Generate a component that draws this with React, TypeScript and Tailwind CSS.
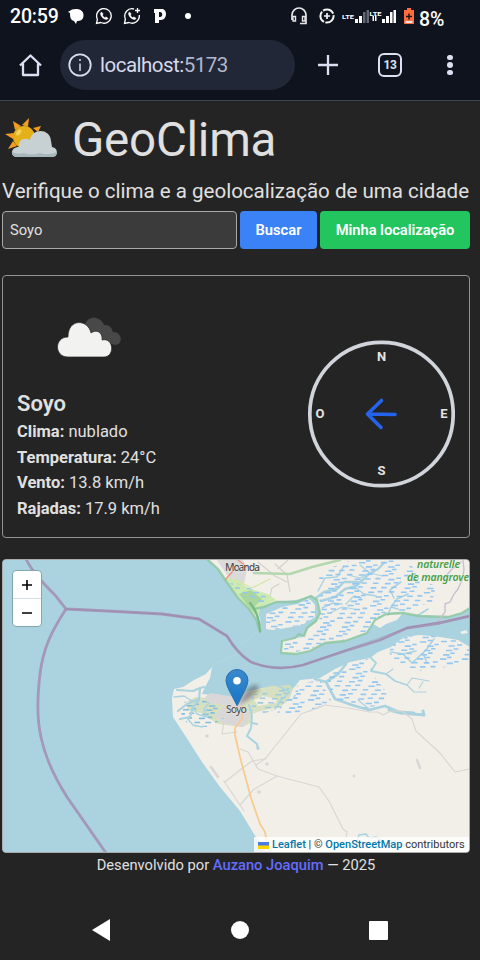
import React from "react";

const marshNorth = "M318 578 L322 570 L336 566 L352 560 L392 560 L412 566 L420 580 L436 586 L432 602 L402 612 L384 614 L374 622 L367 631 L342 640 L326 642 L310 649 L296 652 L284 651 L284 642 L304 640 L308 630 L318 622 L322 611 L319 598 L326 588 Z";
const marshIsland = "M266 629 L266 614 L282 607 L298 604 L309 598 L315 605 L315 617 L302 625 L286 628 L273 630 Z";
const marshSouth = "M470 645 L455 640 L440 637 L425 635 L405 637 L394 644 L388 652 L400 665 L422 671 L442 668 L470 660 Z";
const marshMid = "M328 675 L345 667 L370 658 L374 676 L388 694 L382 705 L364 708 L348 702 L336 700 L328 686 Z";
const marshLow = "M298 684 L320 680 L328 695 L332 702 L310 712 L288 713 L276 716 L282 702 L294 696 Z";
const southLand =
  "M212 667 L210 678 L205 687 L202 694 L212 695 L226 699 L238 703 L246 692 L262 688 L278 686 L292 690 L300 680 L320 678 L335 669 L350 662 L370 658 L378 652 L391 647 L404 637 L420 635 L440 637 L458 640 L470 647 L470 853 L267 853 L254 834 L240 811 L220 787 L202 762 L188 740 L173 717 L172 698 L174 689 L183 687 L194 680 L206 674 Z";

function Dashes({ area, id, seed, color = "#93c8f2" }: { area: string; id: string; seed: number; color?: string }) {
  const nums = area.match(/[\d.]+/g)!.map(Number);
  const xs = nums.filter((_, i) => i % 2 === 0);
  const ys = nums.filter((_, i) => i % 2 === 1);
  const [x0, x1, y0, y1] = [Math.min(...xs), Math.max(...xs), Math.min(...ys), Math.max(...ys)];
  const items: React.ReactNode[] = [];
  let row = 0;
  for (let y = y0 + 1; y < y1; y += 4.3, row++) {
    let col = 0;
    for (let x = x0 - 5 + ((row * 7 + seed) % 10); x < x1; x += 11, col++) {
      const j = Math.sin(row * 12.9 + col * 78.2 + seed) * 2;
      items.push(<rect key={`${row}-${col}`} x={x + j} y={y + j * 0.45} width={5.6 + j * 0.5} height="1.6" rx=".4" />);
    }
  }
  return (
    <g>
      <clipPath id={id}><path d={area} /></clipPath>
      <g clipPath={`url(#${id})`} fill={color}>{items}</g>
    </g>
  );
}

function MapArt() {
  return (
    <svg viewBox="3 560 466 292" className="block h-full w-full" fill="none" strokeLinejoin="round" strokeLinecap="round">
      <rect x="2" y="559" width="468" height="295" fill="#aad3df" />
      <path d="M208 560 L218 569 L226 581 L238 598 L249 609 L256 619 L261 633 L260 618 L256 608 L264 606 L276 602 L296 600 L311 596 L316 600 L320 613 L316 621 L308 628 L303 637 L282 640 L281 653 L296 654 L310 651 L325 643 L345 641 L367 633 L376 619 L384 615 L396 612 L418 616 L448 617 L465 612 L470 608 V560 Z" fill="#f2efe9" />
      <path d="M262 606 L275 602 L296 601 L310 597 L312 600 L298 604 L282 607 L268 613 L267 630 L273 631 L288 630 L304 625 L315 618 L317 621 L308 628 L304 634 L283 640 L264 634 L261 622 L258 611 Z" fill="#aad3df" />
      <path d={marshIsland} fill="#f2efe9" />
      <path d="M373 624 L376 618 L386 614 L403 613 L397 620 L386 624 L380 628 Z" fill="#f2efe9" />
      <path d="M460 632 L466 630 L468 633 L462 634 Z" fill="#f2efe9" />
      <path d="M217 560 L225 572 L238 590 L244 583 L247 570 L243 560 Z" fill="#dadada" />
      <path d="M225 578 L236 579 L248 588 L268 594 L276 600 L260 608 L258 618 L240 600 Z" fill="#cdebb0" />
      <path d="M239 594 L251 590 L262 599 L255 606 L256 614 L248 606 Z" fill="#9dcd97" opacity=".75" />
      <path d="M225 580 L234 570 M238 560 l9 7" stroke="#ee927c" strokeWidth="1.3" />
      <path d="M238 581 l14 7 18 -9" stroke="#d4e7a8" strokeWidth="1.2" />
      <path d="M275 564 L287 575 L290 592 M270 596 L272 588 L279 584 M258 562 l17 14 12 6 M288 560 l-10 9" stroke="#d2d0ce" strokeWidth="1.1" />
      <path d="M254 573 L290 574 L312 567 L340 560" stroke="#b5d7ad" strokeWidth="2.6" />
      <Dashes area="M229 582 L244 585 L258 592 L272 598 L260 604 L240 595 Z" id="g1" seed={3} />

      {/* Tidal channels across the mangrove delta */}
      <g stroke="#aad3df" strokeWidth="2">
        <path d="M316 598 L324 592 L337 589 L344 582 L358 582 M321 601 L335 597 L345 589 L356 586 L369 574 L378 569 L384 563" strokeWidth="2.4" />
        <path d="M322 608 L333 603 L342 604 M318 591 L325 578 L337 577 L344 566 M356 588 L364 594 L376 596 M346 604 L354 596 L361 598" strokeWidth="1.4" />
        <path d="M388 615 L391 607 L397 599 L408 594 M391 607 L398 609 M417 616 L428 609 M394 598 L390 590 L401 582" strokeWidth="1.6" />
        <path d="M360 565 l10 8 12 3 M348 575 l12 3 9 -5 M330 613 l12 -6 12 2" strokeWidth="1.2" />
      </g>
      <Dashes area={marshNorth} id="g2" seed={1} />
      <Dashes area={marshIsland} id="g3" seed={6} />
      <path d="M208 560 L218 569 L226 581 L238 598 L249 609 L256 619 L260 632 M254 609 L264 607 L276 602 L296 602 L311 596 L317 600 L320 613 L316 621 L307 628 L304 636 L299 634 L295 638 L282 641 L281 653 L296 654 L310 651 L325 643 L345 641 L367 633 L375 620 L386 614 L403 613 L419 616 L448 617 L462 613 L470 608" stroke="#8dc8a0" strokeWidth="2.3" opacity=".85" />
      <path d="M250 603 Q259 613 260 631" stroke="#79b98c" strokeWidth="2.4" />
      <path d="M463 560 l1 10 -2 10 -4 9 -4 5 -4 8 -5 2 0 8 -7 10 M445 577 l7 -8 9 -7" stroke="#cbbdce" strokeWidth="1.4" strokeDasharray="3 1" />

      <path d={southLand} fill="#f2efe9" />
      {/* Wetland and urban area around the river mouth */}
      <path d="M188 701 L196 697 L207 698 L225 705 L240 704 L253 691 L270 686 L290 685 L293 689 L289 700 L280 707 L264 710 L252 714 L252 722 L243 727 L218 724 L201 713 L187 710 Z" fill="#d2ddb8" opacity=".85" />
      <path d="M205 697 L211 693 L222 695 L236 697 L251 691 L253 697 L243 704 L248 710 L250 718 L242 727 L224 724 L215 715 L225 705 L208 703 Z" fill="#d9d7d8" />
      <path d="M254 700 L263 696 L277 699 L276 703 L258 706 Z" fill="#f0ede4" />
      <Dashes area="M184 702 L201 699 L221 708 L224 718 L209 727 L190 726 L181 716 Z" id="g4" seed={2} color="#82bfdd" />
      <Dashes area="M252 695 L289 688 L291 702 L276 709 L258 716 L251 710 Z" id="g5" seed={9} color="#9dcbe0" />
      <g stroke="#aad3df" strokeWidth="2">
        <path d="M204 687 L200 688 L193 691 L177 690 M200 688 L199 700 L193 707 L190 717 L180 719 M199 699 L187 704 L178 711" strokeWidth="2.2" />
        <path d="M193 708 L197 714 L207 717 M174 697 l10 -1 8 5 M187 718 l6 7 9 2 M209 703 l-5 6 2 7" strokeWidth="1.4" />
        <path d="M249 705 L252 716 L251 728 L247 736 L257 744 L258 749 M252 723 l5 1" strokeWidth="2" />
        <path d="M278 686 L290 692 L281 700 L275 709" strokeWidth="1.6" />
        <path d="M315 679 L326 682 L335 699 L352 705 L369 710 L385 706 L399 712 L414 713 M326 682 L338 674 L346 664" strokeWidth="2.8" />
        <path d="M371 658 L376 663 L371 671 L386 674 L395 681 L407 685" strokeWidth="1.8" />
        <path d="M407 685 L414 692 L426 692 M386 674 L393 669 M407 685 L412 678 L429 681 M423 682 l-4 6 M369 709 L358 700" strokeWidth="1.1" />
        <path d="M391 652 L403 654 L412 663 L426 650 L434 639 M403 654 L416 651 M423 653 l4 10" strokeWidth="1.6" />
        <path d="M389 710 l12 3 23 2 -1 -4" strokeWidth="3" />
      </g>
      <Dashes area={marshSouth} id="g6" seed={5} />
      <Dashes area={marshMid} id="g7" seed={8} />
      <Dashes area={marshLow} id="g8" seed={4} />
      <circle cx="258" cy="748" r="1.5" fill="#aad3df" />
      <g stroke="#d8d7d5" strokeWidth="1.2">
        <path d="M225 782 L240 770 L252 761 L265 759 L301 714 L325 705 L348 708 L370 712 L378 712 L383 715 L391 711 L402 711 L412 719 L416 731 L440 753 L455 772 L470 769" />
        <path d="M240 805 L253 790 L277 776 M240 749 L248 752 L258 769 L277 776 L319 787 L329 801 L343 829 L347 832 L346 837 M256 765 L266 758 M222 734 L224 722 M222 734 L237 732 M224 781 L244 811" />
        <path d="M417 760 l3 8 M211 767 l7 10" strokeWidth="2.5" />
      </g>
      <g fill="#d9d6dc"><circle cx="207" cy="736" r="1.8" /><circle cx="267" cy="764" r="1.8" /><circle cx="259" cy="792" r="1.8" /><circle cx="354" cy="776" r="1.2" /></g>
      <path d="M242 706 L242 719 L235 728 L235 735 L240 757 L251 798 L260 824 L265 832 L269 853" stroke="#f8cb90" strokeWidth="1.8" />
      <path d="M357 840 l2 -5 7 -1 3 4 M371 838 l5 -1 5 3" stroke="#aad3df" strokeWidth="1.5" />
      <path d="M212 665 L240 653 M240 645 L258 632" stroke="#b6d8da" strokeWidth=".8" />

      <g stroke="#a17ba5" strokeWidth="2.8" opacity=".68">
        <path d="M26 559 C33 574 48 588 55 595 L66 609 L108 611 L162 614 L199 619 L227 636 C234 648 241 656 251 662 C266 668 284 670 303 665 L345 651 L380 640 L407 628 L440 623 L470 616" />
        <path d="M66 609 C51 632 43 649 40 674 C37 699 37 720 41 737 C45 757 55 778 67 797 L106 853" />
      </g>
      <path d="M66 609 L162 614 L199 619 L227 636 C234 648 241 656 251 662 C266 668 284 670 303 665 L407 628 L470 616" stroke="#8f6d96" strokeWidth=".7" opacity=".35" />
      <g fontFamily="Noto Sans, sans-serif" fontSize="10.5" paintOrder="stroke" stroke="#f2efe9" strokeWidth="1.1" strokeOpacity=".8">
        <text x="225" y="571" fill="#4b4b4b" fontWeight="500" textLength="35">Moanda</text>
        <text x="226" y="713" fill="#555" fontWeight="500" textLength="21">Soyo</text>
        <g fill="#45a047" fontStyle="italic" fontWeight="600" fontSize="10.5">
          <text x="417" y="568.3" textLength="43">naturelle</text>
          <text x="407" y="581" textLength="62">de mangrove</text>
        </g>
      </g>
      <defs>
        <linearGradient id="pin" x1="0" y1="670" x2="0" y2="706" gradientUnits="userSpaceOnUse"><stop stopColor="#3989cb" /><stop offset="1" stopColor="#1975c7" /></linearGradient>
        <filter id="soft"><feGaussianBlur stdDeviation="2.3" /></filter>
      </defs>
      <path d="M238 705 L247 689 Q257 681 259 688 Q256 697 238 705Z" fill="#333" opacity=".42" filter="url(#soft)" />
      <path d="M237 705.5 L229 690 Q226 684 226 680.5 A11 11 0 0 1 248 680.5 Q248 684 245 690 Z" fill="url(#pin)" stroke="#2871a9" />
      <circle cx="237" cy="680.7" r="3.8" fill="white" />
    </svg>
  );
}

function SunCloud() {
  return (
    <svg viewBox="0 0 54 42" className="h-[42px] w-[54px]">
      <g fill="#f39c25"><path d="M8 3l8 5-6 4zM24 0l-1 9-6-2zM36 8l-3 6-5-4zM0 16l9-1-1 6zM3 31l5-8 4 5z" /></g>
      <circle cx="19" cy="19" r="11" fill="#e4b11b" />
      <ellipse cx="14" cy="14.500" rx="2" ry="3.500" transform="rotate(38 14 14)" fill="#f2d15d" />
      <path d="M12 39C5 39 5 29 14 29 13 21 20 19 25 22 27 10 45 10 46 23l1 6c7 1 6 10 0 10Z" fill="#c7d0d3" />
      <path d="M7 34q6 3 12 1 8 3 16 0 8 3 17-1c0 4-2 5-5 5H12q-5 0-5-5Z" fill="#a6b8bc" />
    </svg>
  );
}

function WhatsApp({ status = false }: { status?: boolean }) {
  return (
    <svg viewBox="0 0 18 18" className="h-[18px] w-[18px]" fill="none" stroke="white" strokeWidth="1.3">
      <path d={status ? "M11 2A7.3 7.3 0 0 0 2.4 12L1.5 16.5 6 15.5A7.3 7.3 0 0 0 16.3 8M14.5 1v5M12 3.5h5" : "M2.4 12.2 1.5 16.5 5.8 15.5A7.3 7.3 0 1 0 2.4 12.2Z"} />
      <path d="M6.6 5 5.4 6c0 3.5 3 6.5 6.7 6.6l1.1-1.3-2.3-1.5-1 .9C8.6 10 7.9 9 7.5 8l.8-1Z" fill="white" strokeWidth=".3" />
    </svg>
  );
}

function StatusBar() {
  return (
    <div className="flex h-8 items-center pl-[10px] text-white">
      <span className="w-[49px] pt-px text-[19.5px] font-medium leading-8 tracking-[-0.15px]">20:59</span>
      <svg className="ml-[9px] h-4 w-4" viewBox="0 0 16 16" fill="white"><path d="M0 4 4 1.500C8 0 16 1 15.500 7.500 15.500 12 12 13 9 13L8 16 6 13C2.500 12 2 9 2 5Z" /></svg>
      <span className="ml-[11px]"><WhatsApp /></span>
      <span className="ml-[10px]"><WhatsApp status /></span>
      <svg className="ml-[13px] h-4 w-3" viewBox="0 0 12 16"><path fillRule="evenodd" fill="white" d="M0 1h7c3.500 0 5 2 5 5s-2 6-5 6H5v3H1V5H0ZM5 4v5h1c3 0 3-5 0-5Z" /></svg>
      <span className="ml-[19px] h-1.5 w-1.5 rounded-full bg-white" />
      <svg className="ml-[100px] h-[18px] w-4" viewBox="0 0 16 18" fill="none" stroke="#e6e6e8" strokeWidth="1.7"><path d="M1 13V8a7 7 0 0 1 14 0v8.500H9" /><path d="M2 9.500h2.500V14H2Zm9.500 0H14V14h-2.500Z" strokeWidth="1.400" /></svg>
      <svg className="ml-3 h-4 w-4" viewBox="0 0 16 16" fill="none" stroke="#f4f4f4"><circle cx="8" cy="8" r="6.6" strokeWidth="2" strokeDasharray="12 1.400" /><path d="M8 5v6M5 8h6" strokeWidth="1.7" /></svg>
      <svg className="ml-[7px] h-4 w-[54px]" viewBox="342 7 54 16" fill="white">
        <text x="342" y="18" fontSize="6.2" fontWeight="700" fontFamily="Roboto, sans-serif" textLength="12" lengthAdjust="spacingAndGlyphs">LTE</text>
        <path d="M355 18h3v4h-3zM359 15h3v7h-3zM382 18h3v4h-3zM386 15h3v7h-3zM390 11h2.500v11H390zM393.500 9h2.500v13h-2.500z" />
        <path d="M363 11h2.500v11H363zM366.500 9h2.500v13h-2.500z" fill="#646873" />
        <text x="369.5" y="15" fontSize="6.2" fontWeight="700" fontFamily="Roboto, sans-serif" textLength="12" lengthAdjust="spacingAndGlyphs">LTE</text>
        <path d="M372.500 15h1.500v5h-1.500zM375 14h1.500v6H375z" />
      </svg>
      <svg className="ml-2 h-4 w-[10px]" viewBox="0 0 10 16"><path d="M3 0h4v2h3v14H0V2h3Z" fill="#ff6c3c" /><path d="M1.500 13h7v2h-7z" fill="#e3e4e8" /><path d="M5 5.500v6M2 8.500h6" stroke="#151822" strokeWidth="1.500" /></svg>
      <span className="ml-[5px] mt-[8px] text-[19.5px] font-medium leading-8">8%</span>
    </div>
  );
}

function Toolbar() {
  return (
    <div className="flex h-[68px] items-center pb-[2px]">
      <svg className="ml-[18px] h-6 w-6" viewBox="0 0 24 24" fill="none" stroke="#dce0f3" strokeWidth="2.3"><path d="M2 12.500 12.500 2.500 23 12.500M5 10.500V22h15V10.500" strokeLinejoin="round" /></svg>
      <div className="ml-[18px] flex h-[50px] w-[235px] items-center rounded-full bg-[#222738] pl-2 text-[20.5px]">
        <svg className="h-6 w-6" viewBox="0 0 24 24" fill="none" stroke="#d9dced"><circle cx="12" cy="12" r="10.7" strokeWidth="1.8" /><path d="M12 10.500V18M12 6v2" strokeWidth="1.5" /></svg>
        <span className="ml-2 whitespace-nowrap tracking-[-0.5px] text-[#d7daea]">localhost:<span className="text-[#b3b7cb]">5173</span></span>
      </div>
      <svg className="ml-[23px] h-5 w-5" viewBox="0 0 20 20" stroke="#dce0f3" strokeWidth="2.3"><path d="M10 0v20M0 10h20" /></svg>
      <div className="ml-10 flex h-6 w-6 items-center justify-center rounded-[6px] border-[2.5px] border-[#dce0f3] text-[12px] font-bold tracking-[-0.4px] text-[#dce0f3]">13</div>
      <div className="ml-[45px] flex flex-col gap-[2px]">
        <span className="h-[5.5px] w-[5.5px] rounded-full bg-[#dce0f3]" />
        <span className="h-[5.5px] w-[5.5px] rounded-full bg-[#dce0f3]" />
        <span className="h-[5.5px] w-[5.5px] rounded-full bg-[#dce0f3]" />
      </div>
    </div>
  );
}

function Compass() {
  return (
    <svg className="mr-[14px] h-[148px] w-[148px]" viewBox="0 0 148 148" fill="none">
      <circle cx="74.5" cy="74" r="71.7" stroke="#d1d5db" strokeWidth="3.7" />
      <g fill="#e4e4e4" fontSize="13" fontWeight="700" textAnchor="middle" fontFamily="Roboto, sans-serif">
        <text x="74.5" y="20.5">N</text><text x="74.5" y="134.5">S</text><text x="13" y="77.5">O</text><text x="137" y="77.5">E</text>
      </g>
      <path d="M88 74.500 60.500 74M74.500 60.500 60.500 74 74 87.500" stroke="#2563eb" strokeWidth="3.6" strokeLinecap="round" strokeLinejoin="round" />
    </svg>
  );
}

const readings = [["Clima", "nublado"], ["Temperatura", "24°C"], ["Vento", "13.8 km/h"], ["Rajadas", "17.9 km/h"]];

export default function App() {
  return (
    <div className="flex h-[960px] w-[480px] flex-col overflow-hidden bg-[#242424] font-['Roboto',sans-serif] text-[#e0e0e0]">
      <header className="h-[101px] shrink-0 border-b border-[#3e4452] bg-[#0f131e]">
        <StatusBar />
        <Toolbar />
      </header>
      <main className="flex w-[472px] flex-col px-[2px]">
        <h1 className="flex h-[76px] items-center text-[47.5px] leading-none"><span className="ml-[3px] mr-[13px]"><SunCloud /></span><span className="whitespace-nowrap pt-[4px] tracking-[-0.25px]">GeoClima</span></h1>
        <p className="h-[33.5px] whitespace-nowrap text-[20.55px] leading-[28px]">Verifique o clima e a geolocalização de uma cidade</p>
        <div className="flex h-[38.5px] gap-[3px] text-[14.75px]">
          <input readOnly value="Soyo" className="w-[235px] rounded border border-[#a8a8a8] bg-[#3b3b3b] px-[7px] outline-none" />
          <button className="w-[77px] rounded bg-[#3b82f6] pt-px font-semibold text-white">Buscar</button>
          <button className="w-[150px] whitespace-nowrap rounded bg-[#22c55e] pt-px font-semibold tracking-[-0.05px] text-white">Minha localização</button>
        </div>
        <section className="mt-[26px] flex h-[263px] items-center justify-between rounded border border-[#929292]">
          <div className="ml-[14px] h-full pt-[27px]">
            <svg className="ml-[40px] mt-[14px] h-[40px] w-[64px]" viewBox="0 0 64 40">
              <path d="M28 8C30-1 43-2 47 8q7-1 9 7c10 0 10 13 2 13L32 20Z" fill="#484849" />
              <path d="M11 40C-3 40-3 20 11 20 11 1 31 2 34 16c5-4 12-1 11 7 12-3 13 17 2 17Z" fill="#f2f2f1" stroke="#242424" strokeWidth=".7" />
            </svg>
            <h2 className="mt-[31px] h-[31px] text-[22px] font-semibold leading-[31px]">Soyo</h2>
            {readings.map(([name, value]) => <p key={name} className="h-[25.6px] whitespace-nowrap text-[16.5px] leading-[25.6px]"><strong>{name}:</strong> {value}</p>)}
          </div>
          <div className="pt-[15px]"><Compass /></div>
        </section>
        <section className="relative mt-[21px] h-[294px] overflow-hidden rounded border border-[#aaa] bg-[#aad3df]">
          <MapArt />
          <div className="absolute left-[9px] top-[10px] flex h-[57px] w-[30px] flex-col overflow-hidden rounded border-[1.5px] border-[#83a5b0] bg-white text-black">
            <div className="flex h-7 items-center justify-center border-b border-[#d2dfe2]"><svg className="h-[10px] w-[10px]" viewBox="0 0 10 10"><path d="M5 0v10M0 5h10" stroke="black" strokeWidth="1.6" /></svg></div>
            <div className="flex flex-1 items-center justify-center"><svg className="h-[2px] w-[10px]" viewBox="0 0 10 2"><path d="M0 1h10" stroke="black" strokeWidth="1.6" /></svg></div>
          </div>
          <div className="absolute bottom-0 right-0 flex h-[15px] w-[215px] items-center whitespace-nowrap bg-white/80 pl-[4px] pt-px text-[11px] text-[#333]">
            <svg className="mr-[3px] h-[7px] w-[11px]" viewBox="0 0 11 7"><path d="M0 0h11v4H0z" fill="#4c7be1" /><path d="M0 3.500h11V7H0z" fill="#ffd500" /></svg>
            <span><b className="font-medium text-[#0078a8]">Leaflet</b> | © <b className="font-medium text-[#0078a8]">OpenStreetMap</b> contributors</span>
          </div>
        </section>
        <footer className="mt-[1px] whitespace-nowrap text-center text-[14.7px] leading-[22px]">Desenvolvido por <span className="font-medium text-[#646cff]">Auzano Joaquim</span> — 2025</footer>
      </main>
      <nav className="mt-auto flex h-[60px] items-center pl-[92px]">
        <svg className="h-[22px] w-[18px]" viewBox="0 0 18 22" fill="white"><path d="M18 0v22L0 11Z" /></svg>
        <span className="ml-[121px] h-[18px] w-[18px] rounded-full bg-white" />
        <span className="ml-[120px] h-[19px] w-[19px] rounded-[1px] bg-white" />
      </nav>
    </div>
  );
}
